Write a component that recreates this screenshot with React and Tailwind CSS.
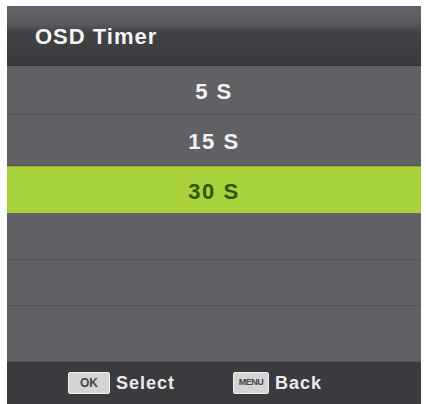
import React from 'react'

const rows = [
  { label: '5 S', h: 'h-[49px]' },
  { label: '15 S', h: 'h-[51px]' },
  { label: '30 S', h: 'h-[47px]', active: true },
  { label: '', h: 'h-[47px]' },
  { label: '', h: 'h-[46px]' },
  { label: '', h: 'h-[56px]' },
]

function KeyCap({ children, className }) {
  return (
    <span
      className={
        'flex items-center justify-center h-[22px] rounded-[2px] border border-[#f0f0f0] bg-[#d4d4d4] text-[#444448] font-bold ' +
        className
      }
    >
      {children}
    </span>
  )
}

export default function App() {
  return (
    <div className="w-[426px] h-[404px] bg-white pt-[6px] pl-[7px] pr-[5px] overflow-hidden font-['Liberation_Sans',Arial,sans-serif]">
      <div className="flex flex-col h-full bg-[#606065]">
        {/* Title bar */}
        <div className="h-[60px] flex items-center pl-[28px] bg-[linear-gradient(to_bottom,#646468_0%,#5a5a5e_30%,#424246_45%,#3a3a3e_100%)] border-b border-[#333337]">
          <span className="text-[22px] font-bold tracking-[1px] text-[#f4f4f4] mt-[2px]">OSD Timer</span>
        </div>

        {/* Options */}
        {rows.map((r, i) => (
          <div
            key={i}
            className={
              'flex items-center justify-center ' +
              r.h +
              (r.active
                ? ' bg-[#a8d23c] border-t border-[#8fb52e]'
                : ' border-b border-[#55555a]')
            }
          >
            <span
              className={
                'text-[22px] font-bold tracking-[1.5px] mt-[3px] ' +
                (r.active ? 'text-[#365410]' : 'text-[#f2f2f2]')
              }
            >
              {r.label}
            </span>
          </div>
        ))}

        {/* Footer hints */}
        <div className="flex-1 flex items-center bg-[#3b3b3f] pl-[61px]">
          <KeyCap className="w-[42px] text-[12px]">OK</KeyCap>
          <span className="ml-[6px] text-[18px] font-bold tracking-[1px] text-[#ececec]">Select</span>
          <KeyCap className="ml-[58px] w-[36px] text-[9px] tracking-[-0.5px]">MENU</KeyCap>
          <span className="ml-[6px] text-[18px] font-bold tracking-[1px] text-[#ececec]">Back</span>
        </div>
      </div>
    </div>
  )
}
